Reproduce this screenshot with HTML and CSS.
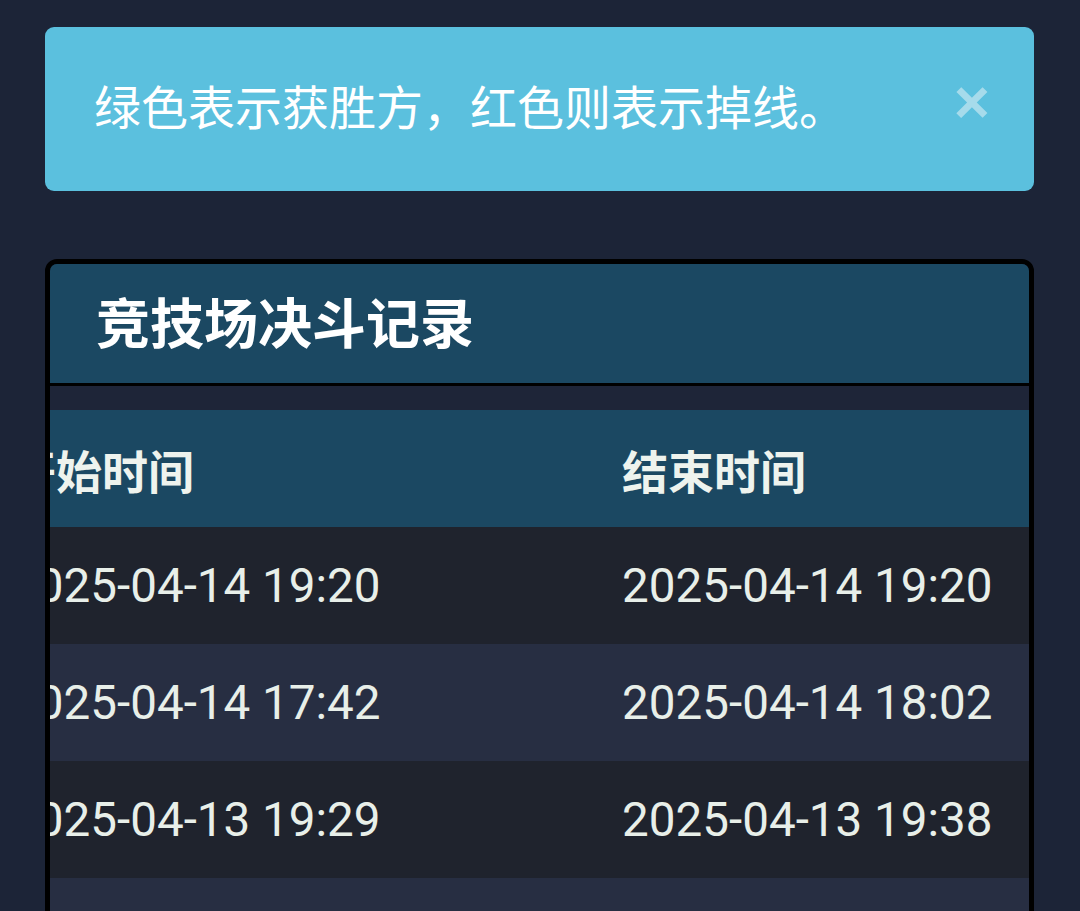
FILE: index.html
```html
<!DOCTYPE html>
<html lang="zh-CN">
<head>
<meta charset="utf-8">
<title>竞技场决斗记录</title>
<link rel="stylesheet" href="styles.css">
</head>
<body>
<main class="page">
  <div class="alert">
    <span class="alert-text">绿色表示获胜方，红色则表示掉线。</span>
    <span class="alert-close">×</span>
  </div>
  <section class="card">
    <header class="card-header">竞技场决斗记录</header>
    <div class="card-body">
      <div class="table-wrap">
        <table class="records">
          <thead>
            <tr><th class="c1">开始时间</th><th class="c2">结束时间</th></tr>
          </thead>
          <tbody>
            <tr><td>2025-04-14 19:20</td><td>2025-04-14 19:20</td></tr>
            <tr><td>2025-04-14 17:42</td><td>2025-04-14 18:02</td></tr>
            <tr><td>2025-04-13 19:29</td><td>2025-04-13 19:38</td></tr>
            <tr><td>2025-04-13 18:51</td><td>2025-04-13 19:05</td></tr>
          </tbody>
        </table>
      </div>
    </div>
  </section>
</main>
</body>
</html>
```
FILE: styles.css
```css
html, body {
  margin: 0;
  padding: 0;
  background: #1c2437;
  height: 100%;
  overflow: hidden;
}
.page {
  padding: 27px 46px 0 45px;
  font-family: Roboto, "Noto Sans CJK SC", sans-serif;
}
.alert {
  box-sizing: border-box;
  height: 164px;
  background: #5bc0de;
  border-radius: 9px;
  display: flex;
  align-items: center;
  justify-content: space-between;
  padding: 0 44px 10px 49px;
  color: #ffffff;
}
.alert-text {
  font-family: "Noto Sans CJK SC", sans-serif;
  font-size: 47px;
  line-height: 1;
}
.alert-close {
  font-family: "Liberation Sans", sans-serif;
  font-size: 62px;
  font-weight: 700;
  line-height: 1;
  color: #a6dbeb;
  margin-top: -4px;
}
.card {
  margin-top: 68px;
  border: 5px solid #000;
  border-radius: 12px;
  overflow: hidden;
  background: #1e2538;
}
.card-header {
  height: 122px;
  box-sizing: border-box;
  background: #1b4862;
  border-bottom: 3px solid #000;
  display: flex;
  align-items: center;
  padding-left: 46px;
  padding-bottom: 7px;
  font-family: "Noto Sans CJK SC", sans-serif;
  font-weight: 700;
  font-size: 54px;
  color: #ffffff;
}
.card-body {
  padding-top: 24px;
  height: 520px;
}
.table-wrap {
  overflow-x: auto;
  direction: rtl;
  scrollbar-width: none;
}
.table-wrap::-webkit-scrollbar { display: none; }
.records {
  direction: ltr;
  border-collapse: collapse;
  table-layout: fixed;
  width: 1055px;
  color: #e8efe9;
}
.records th,
.records td {
  text-align: left;
  padding: 0 36px;
  white-space: nowrap;
  vertical-align: middle;
}
.records .c1 { width: 540px; }
.records .c2 { width: 371px; }
.records th {
  height: 117px;
  background: #1b4862;
  font-family: "Noto Sans CJK SC", sans-serif;
  font-weight: 700;
  font-size: 46px;
  color: #eef3ee;
}
.records td {
  height: 117px;
  font-family: Roboto, sans-serif;
  font-size: 47.6px;
}
.records tbody tr:nth-child(odd) { background: #1f232d; }
.records tbody tr:nth-child(even) { background: #272e42; }
```
